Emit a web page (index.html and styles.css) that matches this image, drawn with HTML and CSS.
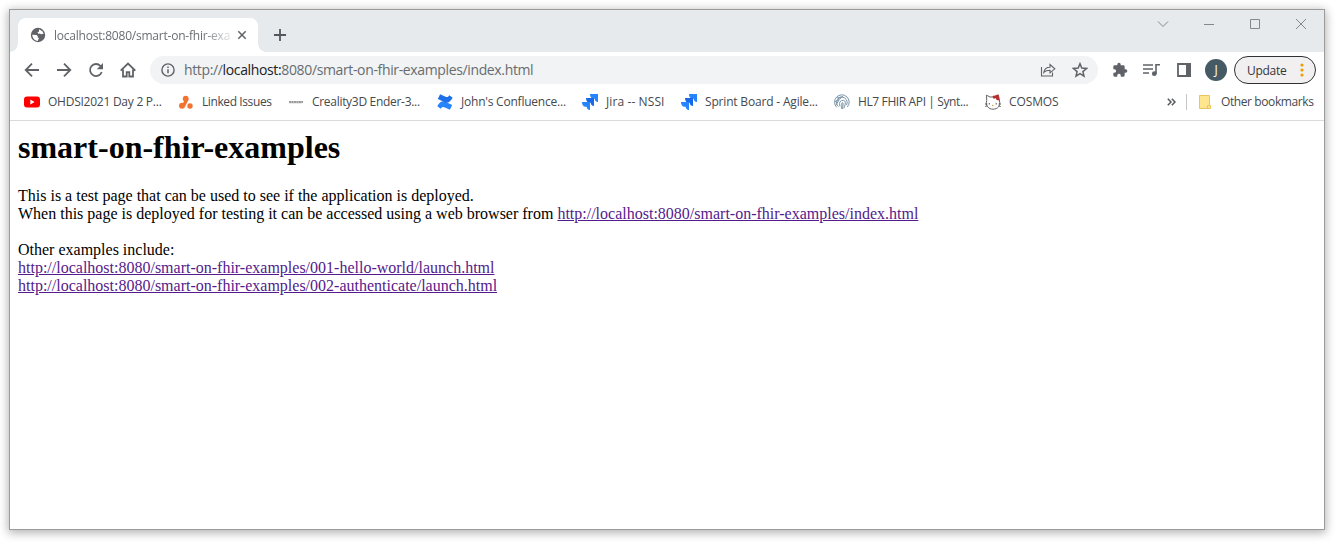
FILE: index.html
```html
<!DOCTYPE html>
<html lang="en">
<head>
<meta charset="utf-8">
<title>localhost:8080/smart-on-fhir-examples</title>
<link rel="stylesheet" href="styles.css">
</head>
<body>
<div class="window">
  <header class="tabstrip">
    <div class="tab">
      <svg class="globe" width="16" height="16" viewBox="0 0 16 16"><circle cx="8" cy="8" r="7.200" fill="#5f6368"/><path d="M2.300 7.800 6.500 8l1.300 1.300v1.400l1.200.2-1.300 3C4.600 13.600 2.300 11 2.300 7.800zM9 2.200l3.400 2 1.200 2.600-2.400.4-1.400-.8-1.500.4-.8-1.400L9 4.600z" fill="#fff"/></svg>
      <span class="tab-title">localhost:8080/smart-on-fhir-exa</span>
      <svg class="tab-close" width="10" height="10" viewBox="0 0 10 10"><path d="M1.300 1.300l7.400 7.400M8.700 1.300 1.300 8.700" stroke="#5f6368" stroke-width="1.500"/></svg>
    </div>
    <svg class="new-tab" width="12" height="12" viewBox="0 0 12 12"><path d="M6 0v12M0 6h12" stroke="#54585c" stroke-width="1.800"/></svg>
    <div class="controls">
      <svg width="12" height="12" viewBox="0 0 12 12"><path d="M1 3.500l5 5 5-5" /></svg>
      <svg width="12" height="12" viewBox="0 0 12 12"><path d="M1 6.500h10" /></svg>
      <svg width="12" height="12" viewBox="0 0 12 12"><path d="M1.500 1.500h9v9h-9z" /></svg>
      <svg width="12" height="12" viewBox="0 0 12 12"><path d="M1 1l10 10M11 1 1 11" /></svg>
    </div>
  </header>
  <nav class="toolbar">
    <div class="nav-icons">
      <svg width="16" height="16" viewBox="0 0 16 16"><path d="M15 8H2M8 1.700 1.700 8 8 14.300"/></svg>
      <svg width="16" height="16" viewBox="0 0 16 16"><path d="M1 8h13M8 1.700 14.300 8 8 14.300"/></svg>
      <svg width="16" height="16" viewBox="0 0 16 16"><path d="M13.700 10A6 6 0 1 1 12.500 4L14 5.500"/><path d="M15 1v6.200H8.800z" fill="#5f6368" stroke="none"/></svg>
      <svg width="16" height="16" viewBox="0 0 16 16"><path d="M.700 8.600 8 1.500l7.300 7.100M3 7.500v7h3.700v-4.300h2.600v4.300H13v-7"/></svg>
    </div>
    <div class="omnibox">
      <svg width="14" height="14" viewBox="0 0 14 14"><circle cx="7" cy="7" r="6.100" fill="none" stroke="#5f6368" stroke-width="1.400"/><path d="M7 6.200v4M7 3.500V5" stroke="#5f6368" stroke-width="1.500"/></svg>
      <span class="url">http://<b>localhost:</b>8080/smart-on-fhir-examples/index.html</span>
      <svg class="share" width="16" height="16" viewBox="0 0 16 16"><path d="M1.500 5v9h11v-3.500M3.800 10.500c.500-3.500 2.600-5.300 6.200-5.300V2.500l4.800 4.300-4.800 4V8.200c-2.800 0-4.700.600-6.200 2.300z" fill="none" stroke="#5f6368" stroke-width="1.100"/></svg>
      <svg width="16" height="16" viewBox="0 0 16 16"><path d="M8 1.700l1.800 4.400 4.700.4-3.600 3.100 1.100 4.600L8 11.700l-4 2.500 1.100-4.600-3.600-3.100 4.700-.4z" fill="none" stroke="#5f6368" stroke-width="1.500"/></svg>
    </div>
    <svg class="puzzle" width="16" height="16" viewBox="0 0 24 24"><path d="M20.500 11H19V7a2 2 0 0 0-2-2h-4V3.500a2.500 2.500 0 0 0-5 0V5H4a2 2 0 0 0-2 2v3.800h1.500a2.700 2.700 0 0 1 0 5.400H2V20a2 2 0 0 0 2 2h3.800v-1.500a2.700 2.700 0 0 1 5.400 0V22H17a2 2 0 0 0 2-2v-4h1.500a2.500 2.500 0 0 0 0-5z" fill="#5f6368"/></svg>
    <svg class="media" width="17" height="14" viewBox="0 0 17 14"><path d="M0 2h10M0 6h10M0 10h6M13 11V1.800h4" fill="none" stroke="#5f6368" stroke-width="1.600"/><circle cx="11.300" cy="10.700" r="2.400" fill="#5f6368"/></svg>
    <svg class="panel" width="14" height="14" viewBox="0 0 14 14"><path d="M1 1h12v12H1z" fill="#fff" stroke="#5f6368" stroke-width="1.800"/><path d="M9 0h5v14H9z" fill="#5f6368"/></svg>
    <span class="avatar">J</span>
    <div class="update"><span>Update</span><svg width="4" height="14" viewBox="0 0 4 14" fill="#e8a000"><circle cx="2" cy="2" r="1.600"/><circle cx="2" cy="7" r="1.600"/><circle cx="2" cy="12" r="1.600"/></svg></div>
  </nav>
  <nav class="bookmarks">
    <a class="bm youtube"><svg width="16" height="16" viewBox="0 0 16 16"><rect y="2.500" width="16" height="11" rx="3" fill="#f00"/><path d="M6.300 5.500 10.600 8l-4.300 2.500z" fill="#fff"/></svg><span>OHDSI2021 Day 2 P...</span></a>
    <a class="bm linked"><svg width="16" height="16" viewBox="0 0 16 16"><g fill="#f27330"><circle cx="7.700" cy="4.700" r="2.900"/><circle cx="12" cy="12" r="2.700"/><circle cx="4" cy="11.800" r="3"/><path d="M9 5 5.500 12" stroke="#f27330" stroke-width="3.400"/></g></svg><span>Linked Issues</span></a>
    <a class="bm creality"><svg width="16" height="16" viewBox="0 0 16 16"><path d="M1 8h14" stroke="#777" stroke-width="1.500" stroke-dasharray="2.200 .3"/><path d="M1 9h13" stroke="#bbb" stroke-width=".6"/></svg><span>Creality3D Ender-3...</span></a>
    <a class="bm confluence"><svg width="16" height="16" viewBox="0 0 16 16"><path d="M.300 12.200C3.600 6.500 6.200 6.700 9.300 8.200l5.900 2.800-2.300 4.800-5-2.300c-2-.9-2.800-.8-4.200 1.300z" fill="#2684ff"/><path d="M15.700 3.800C12.400 9.500 9.800 9.300 6.700 7.800L.800 5 3.100.200l5 2.300c2 .9 2.800.8 4.200-1.300z" fill="#1f6fe8"/></svg><span>John's Confluence...</span></a>
    <a class="bm jira"><svg width="16" height="16" viewBox="0 0 16 16"><path d="M8 0h8v8c-2 0-3.300-1.400-3.300-3.300H11C9.200 4.700 8 2.500 8 0z" fill="#2684ff"/><path d="M4 4h8v8c-2 0-3.300-1.400-3.300-3.300H7C5.200 8.700 4 6.500 4 4z" fill="#1769e8"/><path d="M0 8h8v8c-2 0-3.300-1.400-3.300-3.300H3C1.200 12.700 0 10.500 0 8z" fill="#2684ff"/></svg><span>Jira -- NSSI</span></a>
    <a class="bm sprint"><svg width="16" height="16" viewBox="0 0 16 16"><path d="M8 0h8v8c-2 0-3.300-1.400-3.300-3.300H11C9.200 4.700 8 2.500 8 0z" fill="#2684ff"/><path d="M4 4h8v8c-2 0-3.300-1.400-3.300-3.300H7C5.200 8.700 4 6.500 4 4z" fill="#1769e8"/><path d="M0 8h8v8c-2 0-3.300-1.400-3.300-3.300H3C1.200 12.700 0 10.500 0 8z" fill="#2684ff"/></svg><span>Sprint Board - Agile...</span></a>
    <a class="bm fhir"><svg width="16" height="16" viewBox="0 0 16 16" fill="none" stroke="#7894a8" stroke-width="1"><path d="M2.700 13.300A7.300 7.300 0 1 1 13.300 13M4.400 12.500A5.300 5.300 0 1 1 12.500 11M6 12.500 5.500 9.500A3.200 3.200 0 0 1 11 7.300c1 2-.2 4-1 7M7.700 15l.2-6c.5-1 1.500 0 1.200 1l-.5 5M1 8l6-4M3 4l6-1.500M2 11l3-5"/></svg><span>HL7 FHIR API | Synt...</span></a>
    <a class="bm cosmos"><svg width="16" height="16" viewBox="0 0 16 16"><path d="M1.700 6.500 1.500 1.200 5 3h5l3.500-1.500 1 5.500c1.200 5-2 8.200-6.500 8.200S.2 11.500 1.700 6.500z" fill="#fff" stroke="#666" stroke-width="1"/><path d="M7.500 2 10 1.500 13.500.3l1 6.200-3-.5-.5-1.700-2.500.5z" fill="#b92e2c"/><path d="M4.300 9v1.500M11.200 9v1.500M0 10h2.300M.3 12.500l2-.7M13.700 10H16M13.700 11.800l2 .7" stroke="#555"/><circle cx="7.700" cy="11.500" r=".8" fill="#c9a24b"/></svg><span>COSMOS</span></a>
    <svg class="more" width="9" height="8" viewBox="0 0 9 8"><path d="M.8.800 4 4 .8 7.200M4.800.8 8 4 4.800 7.200" fill="none" stroke="#54585c" stroke-width="1.500"/></svg>
    <span class="divider"></span>
    <a class="bm other"><svg width="14" height="16" viewBox="0 0 14 16"><path d="M1.500 1.500h10v10h1v3h-11z" fill="#ffe58d" stroke="#e8c65c"/><path d="M9.500 14.500v-3h2" fill="none" stroke="#e8c65c"/></svg><span>Other bookmarks</span></a>
  </nav>
  <main class="page">
    <h1>smart-on-fhir-examples</h1>
    <p>This is a test page that can be used to see if the application is deployed.<br>
    When this page is deployed for testing it can be accessed using a web browser from <a class="link">http://localhost:8080/smart-on-fhir-examples/index.html</a></p>
    <p>Other examples include:<br>
    <a class="link">http://localhost:8080/smart-on-fhir-examples/001-hello-world/launch.html</a><br>
    <a class="link">http://localhost:8080/smart-on-fhir-examples/002-authenticate/launch.html</a></p>
  </main>
</div>
</body>
</html>
```
FILE: styles.css
```css
* { box-sizing: border-box; }
body { margin: 0; padding: 9px 16px 12px 9px; height: 542px; background: #fff; overflow: hidden; }
svg { display: block; flex: none; }
.window { width: 1316px; height: 521px; border: 1px solid #9b9b9b; background: #fff; box-shadow: 0 2px 9px 1px rgba(0,0,0,.3); font-family: "Open Sans", "Noto Sans", sans-serif; font-size: 12px; color: #45494d; }
.tabstrip { height: 42px; padding: 8px 17px 0 8px; background: #e7eaed; display: flex; }
.tab { position: relative; width: 240px; height: 34px; background: #fff; border-radius: 8px 8px 0 0; display: flex; align-items: center; padding: 0 11px 0 12px; }
.tab::before, .tab::after { content: ""; position: absolute; bottom: 0; width: 8px; height: 8px; }
.tab::before { left: -8px; background: radial-gradient(circle at 0 0, transparent 7.5px, #fff 8px); }
.tab::after { right: -8px; background: radial-gradient(circle at 100% 0, transparent 7.5px, #fff 8px); }
.tab-title { width: 176px; margin-left: 8px; white-space: nowrap; letter-spacing: -.22px; color: #6a6e72; -webkit-mask-image: linear-gradient(90deg, #000 84%, transparent 104%); mask-image: linear-gradient(90deg, #000 84%, transparent 104%); }
.tab-close { margin-left: 7px; }
.new-tab { margin: 11px 0 0 16px; }
.controls { margin-left: auto; display: flex; gap: 34px; }
.controls svg { fill: none; stroke: #85888b; stroke-width: 1; }
.toolbar { height: 36px; display: flex; align-items: center; padding: 0 8px 0 14px; }
.nav-icons { display: flex; gap: 16px; width: 126px; }
.nav-icons svg { fill: none; stroke: #5f6368; stroke-width: 1.8; }
.omnibox { width: 948px; height: 28px; border-radius: 14px; background: #f1f3f4; display: flex; align-items: center; padding: 0 10px 0 11px; }
.url { margin-left: 9px; font-size: 14px; line-height: 20px; letter-spacing: -.36px; color: #686c70; white-space: nowrap; }
.url b { font-weight: 400; color: #202124; }
.share { margin: 0 16px 0 auto; }
.puzzle { margin-left: 14px; }
.media { margin-left: 15px; }
.panel { margin-left: 17px; }
.avatar { width: 22px; height: 22px; margin-left: 14px; border-radius: 50%; background: #455a64; color: #fff; line-height: 22px; text-align: center; }
.update { width: 82px; height: 28px; margin-left: 7px; border: 1px solid #303134; border-radius: 14px; background: #f1efef; display: flex; align-items: center; padding: 0 11px 0 12px; justify-content: space-between; color: #35363a; letter-spacing: -.3px; }
.bookmarks { height: 33px; display: flex; align-items: center; padding: 0 10px 5px 14px; border-bottom: 1px solid #d8dadc; }
.bm { display: flex; align-items: center; gap: 8px; margin-right: 16px; white-space: nowrap; }
.youtube { width: 138px; letter-spacing: -.25px; }
.linked { width: 94px; letter-spacing: -.4px; }
.creality { width: 133px; letter-spacing: -.3px; }
.confluence { width: 129px; letter-spacing: -.22px; }
.jira { width: 83px; letter-spacing: .1px; }
.sprint { width: 137px; letter-spacing: -.18px; }
.fhir { width: 135px; letter-spacing: -.38px; }
.cosmos { width: 73px; letter-spacing: -.1px; }
.more { margin-left: auto; }
.divider { width: 1px; height: 16px; margin: 0 11px 0 10px; background: #c4c7ca; }
.other { margin-right: 0; width: 116px; letter-spacing: -.4px; gap: 9px; }
.page { padding: 8px; font-family: "Liberation Serif", "Times New Roman", serif; font-size: 16px; line-height: 18px; color: #000; }
.page h1 { margin: 0 0 21px; font-size: 32px; line-height: 37px; }
.page p { margin: 0 0 18px; }
.link { color: #551a8b; text-decoration: underline; }
```
